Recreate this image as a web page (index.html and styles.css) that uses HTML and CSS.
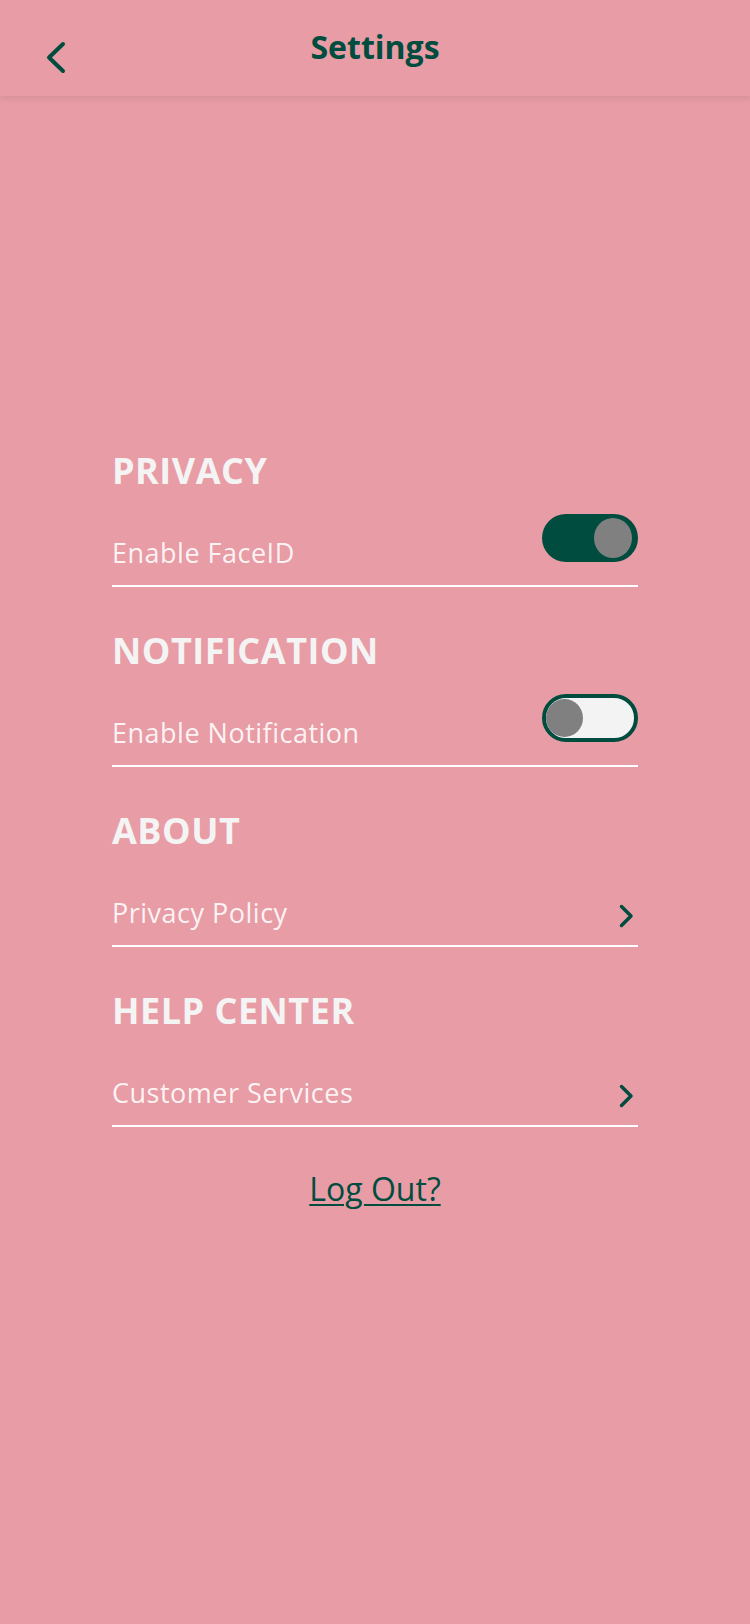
FILE: index.html
```html
<!DOCTYPE html>
<html lang="en">
<head>
<meta charset="utf-8">
<title>Settings</title>
<link rel="stylesheet" href="styles.css">
</head>
<body>
<header class="topbar">
  <div class="topbar-left">
    <svg class="back-icon" width="24" height="36" viewBox="0 0 24 36" aria-hidden="true">
      <polyline points="18,4 4,17.5 18,31" fill="none" stroke="#004c3f" stroke-width="4" stroke-linecap="round" stroke-linejoin="round"/>
    </svg>
  </div>
  <h1 class="title">Settings</h1>
  <div class="topbar-right"></div>
</header>

<main class="content">
  <section class="section">
    <h2 class="section-title">PRIVACY</h2>
    <div class="row">
      <span class="label">Enable FaceID</span>
      <div class="switch switch-on"><span class="knob"></span></div>
    </div>
  </section>

  <section class="section">
    <h2 class="section-title">NOTIFICATION</h2>
    <div class="row">
      <span class="label">Enable Notification</span>
      <div class="switch switch-off"><span class="knob"></span></div>
    </div>
  </section>

  <section class="section">
    <h2 class="section-title">ABOUT</h2>
    <div class="row">
      <span class="label">Privacy Policy</span>
      <svg class="chevron" width="16" height="26" viewBox="0 0 16 26" aria-hidden="true">
        <polyline points="3.5,3.5 13,13 3.5,22.5" fill="none" stroke="#004c3f" stroke-width="3.5" stroke-linecap="round" stroke-linejoin="round"/>
      </svg>
    </div>
  </section>

  <section class="section">
    <h2 class="section-title">HELP CENTER</h2>
    <div class="row">
      <span class="label">Customer Services</span>
      <svg class="chevron" width="16" height="26" viewBox="0 0 16 26" aria-hidden="true">
        <polyline points="3.5,3.5 13,13 3.5,22.5" fill="none" stroke="#004c3f" stroke-width="3.5" stroke-linecap="round" stroke-linejoin="round"/>
      </svg>
    </div>
  </section>

  <div class="logout-wrap">
    <a class="logout" href="#">Log Out?</a>
  </div>
</main>
</body>
</html>
```

FILE: styles.css
```css
* {
  box-sizing: border-box;
}

html, body {
  margin: 0;
  padding: 0;
}

body {
  min-height: 1624px;
  background: #e89ca5;
  font-family: "Open Sans", "Noto Sans", sans-serif;
  color: #ffffff;
}

.topbar {
  height: 96px;
  background: #e89ca5;
  box-shadow: 0 3px 6px rgba(0, 0, 0, 0.08);
  display: grid;
  grid-template-columns: 1fr auto 1fr;
  align-items: start;
  position: relative;
  z-index: 1;
}

.topbar-left {
  padding-left: 45px;
  padding-top: 40px;
}

.back-icon {
  display: block;
}

.title {
  margin: 0;
  padding-top: 25px;
  font-size: 32px;
  line-height: 44px;
  font-weight: 700;
  color: #004c3f;
}

.content {
  width: 526px;
  margin: 0 auto;
  padding-top: 310px;
}

.section {
  padding-top: 42px;
}

.section + .section {
  padding-top: 41px;
}

.section-title {
  margin: 0;
  font-size: 36px;
  line-height: 46px;
  font-weight: 700;
  color: #f5f4f4;
  letter-spacing: 0.5px;
}

.row {
  margin-top: 20px;
  display: flex;
  justify-content: space-between;
  align-items: flex-start;
  padding-bottom: 14px;
  border-bottom: 2px solid #ffffff;
}

.label {
  margin-top: 21px;
  font-size: 27px;
  line-height: 36px;
  letter-spacing: 0.5px;
  color: rgba(255, 255, 255, 0.9);
}

.switch {
  width: 96px;
  height: 48px;
  border-radius: 24px;
  display: flex;
  align-items: center;
}

.switch-on {
  background: #004c3f;
  justify-content: flex-end;
  padding-right: 6px;
}

.switch-off {
  background: #f3f3f3;
  border: 4px solid #004c3f;
  justify-content: flex-start;
}

.knob {
  display: block;
  width: 38px;
  height: 40px;
  border-radius: 50%;
  background: #808080;
}

.switch-off .knob {
  height: 38px;
  width: 37px;
}

.chevron {
  display: block;
  margin-top: 29px;
  margin-right: 4px;
}

.logout-wrap {
  margin-top: 41px;
  text-align: center;
}

.logout {
  font-size: 32px;
  line-height: 42px;
  color: #004c3f;
  text-decoration: underline;
  text-decoration-thickness: 2px;
  text-underline-offset: 3px;
}
```
